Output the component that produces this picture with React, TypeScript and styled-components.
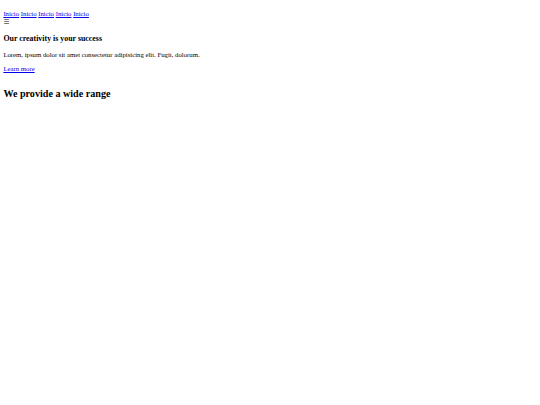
import React from "react";
import styled, { createGlobalStyle } from "styled-components";

const Global = createGlobalStyle`
  html, body { background: #fff; }
  body {
    margin: 3.375px;
    font-family: "Liberation Serif", "Times New Roman", serif;
    font-size: 6.75px;
    color: #000;
  }
`;

const Header = styled.header`
  padding-top: 6.75px;
`;

const Nav = styled.nav`
  line-height: normal;
`;

const NavLink = styled.a`
  color: #0000ee;
  text-decoration: underline;
`;

const Burger = styled.div`
  font-family: "DejaVu Sans", sans-serif;
  font-size: 6.75px;
  line-height: normal;
  margin-top: 1px;
  color: #555;
`;

const Section = styled.section``;

const Title = styled.h3`
  font-size: 7.9px;
  font-weight: bold;
  margin: 7.9px 0;
`;

const Text = styled.p`
  margin: 6.75px 0;
`;

const More = styled.a`
  color: #0000ee;
  text-decoration: underline;
`;

const Heading = styled.h2`
  font-size: 10.125px;
  font-weight: bold;
  margin: 16.6px 0 8.4px;
`;

export default function App() {
  const links = ["Inicio", "Inicio", "Inicio", "Inicio", "Inicio"];
  return (
    <>
      <Global />
      <Header>
        <Nav>
          {links.map((l, i) => (
            <React.Fragment key={i}>
              <NavLink href="#">{l}</NavLink>{" "}
            </React.Fragment>
          ))}
        </Nav>
        <Burger>☰</Burger>
      </Header>
      <Section>
        <Title>Our creativity is your success</Title>
        <Text>Lorem, ipsum dolor sit amet consectetur adipisicing elit. Fugit, dolorum.</Text>
        <Text>
          <More href="#">Learn more</More>
        </Text>
      </Section>
      <Heading>We provide a wide range</Heading>
    </>
  );
}
